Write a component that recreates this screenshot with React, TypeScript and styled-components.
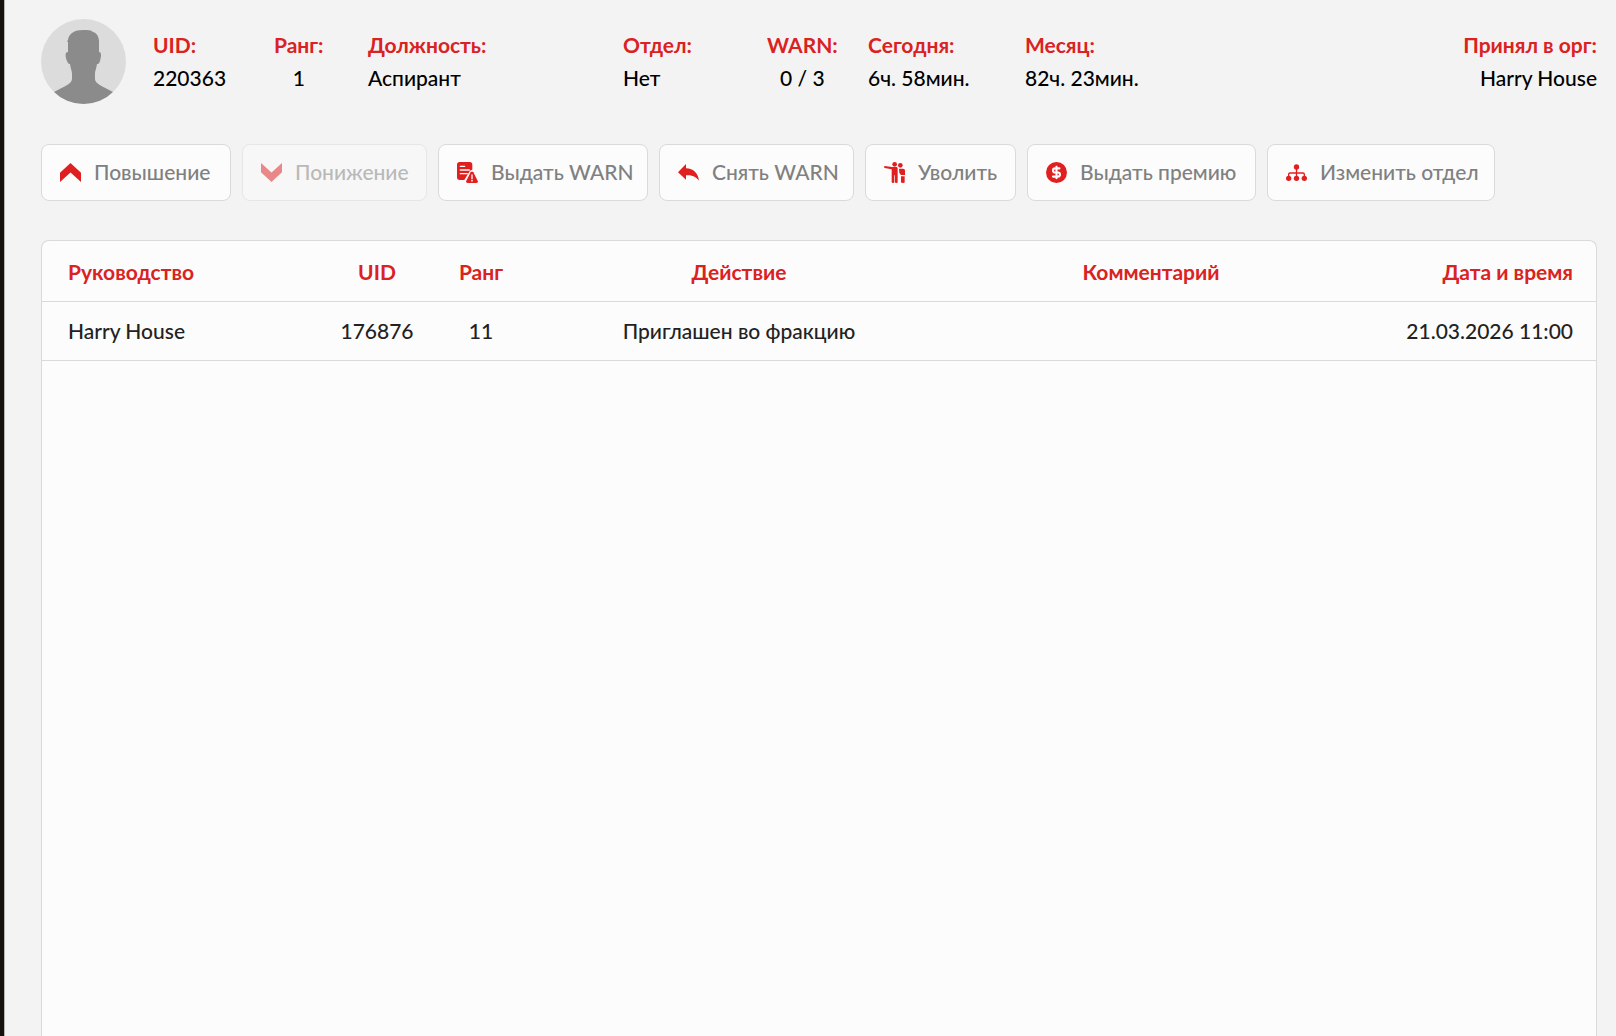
import React from "react";
import styled, { createGlobalStyle } from "styled-components";
import { DollarSign } from "lucide-react";

const RED = "#e02020";
const RED_TEXT = "#da2222";
const LINE = "#dadada";

const GlobalStyle = createGlobalStyle`
  *, *::before, *::after { box-sizing: border-box; }
  body {
    margin: 0;
    background: #f3f3f3;
    color: #000;
    font-family: Lato, "Noto Sans", sans-serif;
    font-size: 21px;
    font-weight: 500;
    line-height: 26px;
  }
`;

const Page = styled.div`
  min-height: 100vh;
  display: flex;
  flex-direction: column;
  padding: 19px 19px 0 37px;
  border-left: 4px solid #14110f;
  box-shadow: inset 1px 0 0 #b5b5b5;
`;

const Profile = styled.header`
  display: flex;
  align-items: center;
  gap: 27px;
`;

const Avatar = styled.svg`
  flex: none;
  width: 85px;
  height: 85px;
`;

const Facts = styled.dl`
  flex: 1;
  display: grid;
  grid-template-columns: 121px 94px 255px 144px 101px 157px 1fr auto;
  margin: 0;
`;

const Fact = styled.div<{ $align?: "left" | "center" | "right" }>`
  display: flex;
  flex-direction: column;
  gap: 7px;
  justify-self: ${(p) => (p.$align === "right" ? "end" : "start")};
  text-align: ${(p) => p.$align ?? "left"};
  white-space: nowrap;
`;

const Label = styled.dt`
  color: ${RED_TEXT};
  font-weight: 700;
`;

const Value = styled.dd`
  margin: 0;
`;

const Toolbar = styled.div`
  display: flex;
  flex-wrap: wrap;
  gap: 11px;
  margin: 40px 0 39px;
`;

const ActionButton = styled.button<{ $width: number }>`
  display: flex;
  align-items: center;
  gap: 13px;
  width: ${(p) => p.$width}px;
  height: 57px;
  padding: 0 0 0 18px;
  border: 1px solid ${LINE};
  border-radius: 8px;
  background: #fcfcfc;
  color: #808080;
  font: inherit;
  white-space: nowrap;
  cursor: pointer;

  &:disabled {
    opacity: 0.5;
    cursor: default;
  }
`;

const ButtonText = styled.span`
  padding-bottom: 2px;
`;

const Icon = styled.svg`
  flex: none;
  width: 21px;
  height: 21px;
  fill: ${RED};
`;

const Panel = styled.section`
  flex: 1;
  border: 1px solid ${LINE};
  border-bottom: 0;
  border-radius: 8px 8px 0 0;
  background: #fcfcfc;
`;

const Table = styled.table`
  width: 100%;
  table-layout: fixed;
  border-collapse: collapse;
`;

const Col = styled.col<{ $width?: number }>`
  width: ${(p) => (p.$width ? `${p.$width}px` : "auto")};
`;

const HeadCell = styled.th`
  height: 60px;
  padding: 3px 0 0;
  border-bottom: 1px solid ${LINE};
  color: ${RED_TEXT};
  font-weight: 700;
  text-align: center;

  &:first-child { padding-left: 26px; text-align: left; }
  &:last-child { padding-right: 23px; text-align: right; }
`;

const Cell = styled.td`
  height: 59px;
  padding: 0;
  border-bottom: 1px solid ${LINE};
  color: #222;
  text-align: center;

  &:first-child { padding-left: 26px; text-align: left; }
  &:last-child { padding-right: 23px; text-align: right; }
`;

const UpIcon = () => (
  <Icon viewBox="0 0 21 21" aria-hidden="true">
    <path d="M10.5 1 21 10.8V20L10.5 10.4 0 20v-9.2z" />
  </Icon>
);

const DownIcon = () => (
  <Icon viewBox="0 0 21 21" aria-hidden="true">
    <path d="M10.5 20 21 10.2V1L10.5 10.6 0 1v9.2z" />
  </Icon>
);

const WarnIcon = () => (
  <Icon viewBox="0 0 63 63" aria-hidden="true">
    <path d="M8 0h30q8 0 8 8v15q-5 0-9 6L22 54H8q-8 0-8-8V8q0-8 8-8z" />
    <path d="M10 13h13M10 24h27M10 35h21" stroke="#fcfcfc" strokeWidth="4" strokeLinecap="round" />
    <path d="M41 31q4-5 8 0l13 25q3 7-4 7H32q-7 0-4-7z" />
    <path d="M45 39v11" stroke="#fcfcfc" strokeWidth="4" strokeLinecap="round" />
    <circle cx="45" cy="56" r="2.5" fill="#fcfcfc" />
  </Icon>
);

const UndoIcon = () => (
  <Icon viewBox="0 0 63 63" aria-hidden="true">
    <path d="M0 31 24 6v13c23 1 36 14 39 37-10-13-22-17-39-16v13z" />
  </Icon>
);

const DismissIcon = () => (
  <Icon viewBox="0 0 63 63" aria-hidden="true">
    <circle cx="32" cy="7" r="7" />
    <circle cx="49" cy="10" r="7" />
    <path d="M2 12 24 15h13q4 0 4 4v42q0 2-4 2t-4-2V40h-2v21q0 2-4 2t-4-2V22L2 18q-4-3 0-6z" />
    <path d="M45 20h12q6 0 6 6v13H51l-5-6zM51 43h11v18q0 2-5 2t-6-2z" />
  </Icon>
);

const BonusIcon = () => (
  <Icon viewBox="0 0 21 21" aria-hidden="true">
    <circle cx="10.5" cy="10.5" r="10.5" />
    <DollarSign x={3.5} y={3.5} width={14} height={14} color="#fcfcfc" fill="none" strokeWidth={3.6} />
  </Icon>
);

const StructureIcon = () => (
  <Icon viewBox="0 0 63 63" aria-hidden="true">
    <circle cx="31.5" cy="15" r="8" />
    <circle cx="8" cy="49" r="8" />
    <circle cx="31.5" cy="49" r="8" />
    <circle cx="55" cy="49" r="8" />
    <path d="M31.5 20v24M8 44v-7q0-4 4-4h39q4 0 4 4v7" fill="none" stroke={RED} strokeWidth="4" />
  </Icon>
);

const facts: { label: string; value: string; align?: "left" | "center" | "right" }[] = [
  { label: "UID:", value: "220363" },
  { label: "Ранг:", value: "1", align: "center" },
  { label: "Должность:", value: "Аспирант" },
  { label: "Отдел:", value: "Нет" },
  { label: "WARN:", value: "0 / 3", align: "center" },
  { label: "Сегодня:", value: "6ч. 58мин." },
  { label: "Месяц:", value: "82ч. 23мин." },
  { label: "Принял в орг:", value: "Harry House", align: "right" },
];

const actions = [
  { label: "Повышение", icon: UpIcon, width: 190 },
  { label: "Понижение", icon: DownIcon, width: 185, disabled: true },
  { label: "Выдать WARN", icon: WarnIcon, width: 210 },
  { label: "Снять WARN", icon: UndoIcon, width: 195 },
  { label: "Уволить", icon: DismissIcon, width: 151 },
  { label: "Выдать премию", icon: BonusIcon, width: 229 },
  { label: "Изменить отдел", icon: StructureIcon, width: 228 },
];

const columns = [
  { title: "Руководство", width: 283 },
  { title: "UID", width: 104 },
  { title: "Ранг", width: 104 },
  { title: "Действие" },
  { title: "Комментарий" },
  { title: "Дата и время", width: 239 },
];

const rows = [["Harry House", "176876", "11", "Приглашен во фракцию", "", "21.03.2026 11:00"]];

export default function App() {
  return (
    <>
      <GlobalStyle />
      <Page>
        <Profile>
          <Avatar viewBox="0 0 85 85" aria-hidden="true">
            <defs>
              <clipPath id="avatar-clip">
                <circle cx="42.5" cy="42.5" r="42.5" />
              </clipPath>
            </defs>
            <circle cx="42.5" cy="42.5" r="42.5" fill="#dcdcdc" />
            <path
              clipPath="url(#avatar-clip)"
              fill="#8b8b8b"
              d="M42 11c5 0 8 0 10 2 4 1 6 5 6 10v10c3 0 2 5 1 9-1 3-2 3-3 3-1 6-2 7-2 10v5c0 5 9 8 18 13v22H13V73c9-5 18-8 18-13v-5c0-3-1-4-2-10-2 0-2-1-3-3-2-5-2-9 1-9V23c-1 0-1-1 0-2 1-7 7-10 15-10z"
            />
          </Avatar>
          <Facts>
            {facts.map((f) => (
              <Fact key={f.label} $align={f.align}>
                <Label>{f.label}</Label>
                <Value>{f.value}</Value>
              </Fact>
            ))}
          </Facts>
        </Profile>

        <Toolbar>
          {actions.map(({ label, icon: Glyph, width, disabled }) => (
            <ActionButton key={label} type="button" $width={width} disabled={disabled}>
              <Glyph />
              <ButtonText>{label}</ButtonText>
            </ActionButton>
          ))}
        </Toolbar>

        <Panel>
          <Table>
            <colgroup>
              {columns.map((c) => (
                <Col key={c.title} $width={c.width} />
              ))}
            </colgroup>
            <thead>
              <tr>
                {columns.map((c) => (
                  <HeadCell key={c.title} scope="col">
                    {c.title}
                  </HeadCell>
                ))}
              </tr>
            </thead>
            <tbody>
              {rows.map((row) => (
                <tr key={row[5]}>
                  {row.map((text, i) => (
                    <Cell key={columns[i].title}>{text}</Cell>
                  ))}
                </tr>
              ))}
            </tbody>
          </Table>
        </Panel>
      </Page>
    </>
  );
}
